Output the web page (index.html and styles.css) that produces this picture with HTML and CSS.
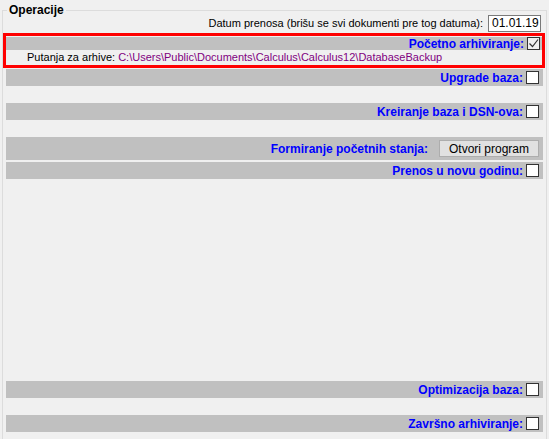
FILE: index.html
```html
<!DOCTYPE html>
<html lang="sr">
<head>
  <meta charset="UTF-8">
  <title>Operacije</title>
  <link rel="stylesheet" href="styles.css">
</head>
<body>
  <fieldset class="group">
    <legend>Operacije</legend>

    <div class="datum-row">
      <span>Datum prenosa (brišu se svi dokumenti pre tog datuma):</span>
      <span class="datum">01.01.19</span>
    </div>

    <div class="selected">
      <div class="bar">
        <label>Početno arhiviranje:</label>
        <span class="check checked">
          <svg width="11" height="11" viewBox="0 0 11 11"><path d="M1.5 5.5 L4.5 8.5 L10 1.5" fill="none" stroke="#333" stroke-width="1.2"/></svg>
        </span>
      </div>
      <div class="path-row">
        Putanja za arhive: <span class="path">C:\Users\Public\Documents\Calculus\Calculus12\DatabaseBackup</span>
      </div>
    </div>

    <div class="bar">
      <label>Upgrade baza:</label>
      <span class="check"></span>
    </div>

    <div class="bar spaced">
      <label>Kreiranje baza i DSN-ova:</label>
      <span class="check"></span>
    </div>

    <div class="bar tall spaced">
      <label>Formiranje početnih stanja:</label>
      <button type="button">Otvori program</button>
    </div>

    <div class="bar near">
      <label>Prenos u novu godinu:</label>
      <span class="check"></span>
    </div>

    <div class="filler"></div>

    <div class="bar">
      <label>Optimizacija baza:</label>
      <span class="check"></span>
    </div>

    <div class="bar spaced">
      <label>Završno arhiviranje:</label>
      <span class="check"></span>
    </div>
  </fieldset>
</body>
</html>
```

FILE: styles.css
```css
* {
  box-sizing: border-box;
}

body {
  margin: 0;
  height: 439px;
  background-color: #f0f0f0;
  font-family: "Liberation Sans", Arial, sans-serif;
  font-size: 11px;
  color: #000;
}

.group {
  margin: 3px 2px 0 2px;
  padding: 0 1px 0 0;
  height: 436px;
  border: 1px solid #dcdcdc;
  border-bottom: none;
  display: flex;
  flex-direction: column;
}

.group legend {
  margin-left: 4px;
  padding: 0 2px;
  font-weight: bold;
  font-size: 12px;
}

.datum-row {
  display: flex;
  justify-content: flex-end;
  align-items: center;
  gap: 5px;
  height: 18px;
  margin-top: -3px;
  padding-right: 4px;
}

.datum {
  width: 53px;
  height: 17px;
  border: 1px solid #7a7a7a;
  background: #fff;
  font-size: 12px;
  line-height: 15px;
  padding: 0 3px;
  white-space: nowrap;
  overflow: hidden;
}

.selected {
  margin-top: 1px;
  border: 3px solid #f00;
}

.bar {
  display: flex;
  justify-content: flex-end;
  align-items: center;
  gap: 3px;
  height: 17px;
  margin: 1px 2px 0 3px;
  padding-right: 4px;
  background-color: #c0c0c0;
}

.selected .bar {
  height: 13px;
  margin: 1px 0 0 0;
  padding-right: 2px;
}

.bar label {
  color: #0000ff;
  font-weight: bold;
  font-size: 12px;
}

.bar.spaced {
  margin-top: 17px;
}

.bar.tall {
  height: 23px;
}

.bar.near {
  margin-top: 2px;
}

.check {
  width: 13px;
  height: 13px;
  border: 1px solid #333;
  background: #fff;
  display: flex;
  align-items: center;
  justify-content: center;
}

.check.checked {
  background: #f0f0f0;
}

.bar button {
  margin-left: 8px;
  width: 100px;
  height: 17px;
  border: 1px solid #adadad;
  background: #e1e1e1;
  font: inherit;
  font-size: 12px;
  padding: 0;
}

.path-row {
  height: 15px;
  padding-left: 21px;
  line-height: 15px;
}

.path {
  color: #800080;
}

.filler {
  height: 201px;
}
```
